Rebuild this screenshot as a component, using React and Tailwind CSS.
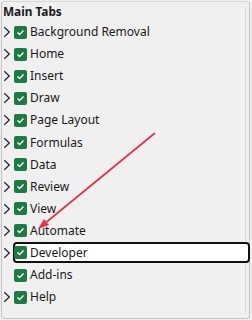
import React from "react";

const items = [
  { label: "Background Removal", chev: true },
  { label: "Home", chev: true },
  { label: "Insert", chev: true },
  { label: "Draw", chev: true },
  { label: "Page Layout", chev: true },
  { label: "Formulas", chev: true },
  { label: "Data", chev: true },
  { label: "Review", chev: true },
  { label: "View", chev: true },
  { label: "Automate", chev: true },
  { label: "Developer", chev: true, selected: true },
  { label: "Add-ins", chev: false },
  { label: "Help", chev: true },
];

function Chevron() {
  return (
    <svg width="8" height="12" viewBox="0 0 8 12" className="block">
      <path d="M1.3 1.2 L6.3 6 L1.3 10.8" fill="none" stroke="#222" strokeWidth="1.2" />
    </svg>
  );
}

function Check() {
  return (
    <div className="relative w-[13px] h-[13px] rounded-[2px] bg-[#1c7a43] flex items-center justify-center shrink-0">
      <svg width="9" height="9" viewBox="0 0 9 9">
        <path d="M1.5 4.5 L3.6 6.5 L7.5 2.5" fill="none" stroke="#fff" strokeWidth="1.4" />
      </svg>
    </div>
  );
}

export default function App() {
  return (
    <div
      className="w-[252px] h-[320px] bg-[#f0f0f0] p-[1px] pr-[2px]"
      style={{ fontFamily: '"Noto Sans", "Open Sans", Arial, sans-serif' }}
    >
      <div className="relative h-full rounded-[4px] border border-[#c4c4c4] border-t-[#d8d8d8] pl-[1px]">
        <div className="absolute top-[4px] bottom-[4px] right-[3px] w-[1px] bg-[#dcdcdc]" />
        <div className="h-[19px] flex items-center text-[11.8px] font-bold text-[#1a1a1a] leading-none pt-[1px]">
          Main Tabs
        </div>
        <div className="flex flex-col">
          {items.map((it) => (
            <div key={it.label} className="relative h-[22.1px] flex items-center">
              {it.selected ? (
                <div className="absolute left-[10px] right-[-1px] top-[0px] h-[21px] border-2 border-[#111] rounded-[4px] bg-white" />
              ) : null}
              <div className="relative w-[11px] flex items-center shrink-0">
                {it.chev ? <Chevron /> : null}
              </div>
              <div className="relative">
                <Check />
              </div>
              <span className="relative ml-[3px] text-[12px] text-[#1a1a1a] leading-none">
                {it.label}
              </span>
            </div>
          ))}
        </div>
        <svg
          className="absolute pointer-events-none z-20"
          width="252"
          height="320"
          viewBox="0 0 252 320"
          style={{ left: -2, top: -1 }}
        >
          <line x1="155" y1="132" x2="46.5" y2="221" stroke="#e0344c" strokeWidth="1.8" />
          <polygon points="38,228 49,224.1 44,217.9" fill="#e0344c" />
        </svg>
      </div>
    </div>
  );
}
